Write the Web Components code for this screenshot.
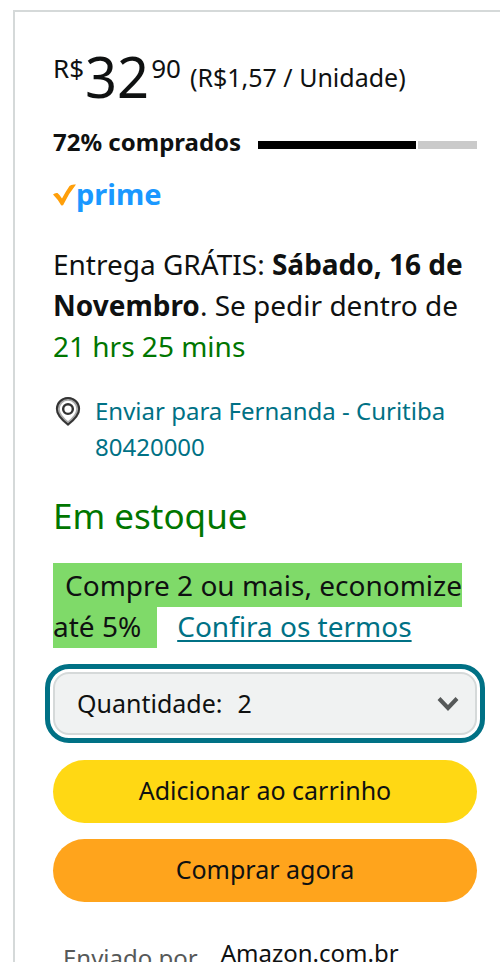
<!DOCTYPE html>
<html lang="pt-BR">
<head>
<meta charset="utf-8">
<meta name="viewport" content="width=device-width, initial-scale=1">
<title>Opções de compra</title>
<style>
  html { background: #fff; }
  body {
    margin: 0;
    color: #0f1111;
    font: 28px/41px "Noto Sans", "Open Sans", sans-serif;
    --line: #d5d9d9;
    --link: #007185;
    --ok: #007600;
    --small: 24px;
    --control: 25px;
  }
</style>
</head>
<body>
<buy-box>
  <price-tag symbol="R$" whole="32" cents="90">(R$1,57 / Unidade)</price-tag>
  <claimed-bar value="72">72% comprados</claimed-bar>
  <prime-badge></prime-badge>
  <delivery-message>Entrega GRÁTIS: <b>Sábado, 16 de Novembro</b>. Se pedir dentro de <span slot="countdown">21 hrs 25 mins</span></delivery-message>
  <delivery-location>Enviar para Fernanda - Curitiba 80420000</delivery-location>
  <stock-status>Em estoque</stock-status>
  <promo-message>Compre 2 ou mais, economize até 5%<span slot="terms">Confira os termos</span></promo-message>
  <quantity-select value="2">Quantidade:</quantity-select>
  <pill-button style="--fill:#ffd814">Adicionar ao carrinho</pill-button>
  <pill-button style="--fill:#ffa41c">Comprar agora</pill-button>
  <seller-info><span slot="term">Enviado por</span>Amazon.com.br</seller-info>
</buy-box>

<script>
  const define = (name, html, setup) => {
    const template = document.createElement('template');
    template.innerHTML = html;
    customElements.define(name, class extends HTMLElement {
      constructor() {
        super();
        this.attachShadow({ mode: 'open' }).append(template.content.cloneNode(true));
      }
      connectedCallback() {
        if (setup) setup(this, this.shadowRoot);
      }
    });
  };

  define('buy-box', `
    <style>
      :host {
        display: flex; flex-direction: column;
        box-sizing: border-box;
        margin: 10px 0 0 13px;
        padding: 36px 23px 0 38px;
        border: solid var(--line);
        border-width: 2px 0 0 2px;
      }
    </style>
    <slot></slot>`);

  define('price-tag', `
    <style>
      :host { display: flex; align-items: flex-start; white-space: nowrap; }
      .small { font-size: 26px; line-height: 40px; }
      .whole { font-size: 56px; line-height: 56px; padding: 0 2px 0 1px; }
      .unit { font-size: var(--control); line-height: 58px; padding-left: 9px; }
    </style>
    <span class="small" id="symbol"></span><span class="whole" id="whole"></span><span class="small" id="cents"></span>
    <span class="unit"><slot></slot></span>`,
    (el, root) => ['symbol', 'whole', 'cents'].forEach(k => {
      root.getElementById(k).textContent = el.getAttribute(k);
    }));

  define('claimed-bar', `
    <style>
      :host { display: flex; align-items: center; gap: 17px; margin-top: 18px; }
      span { font-size: var(--small); line-height: 36px; font-weight: 700; white-space: nowrap; }
      .track { flex: 1; display: flex; gap: 2px; height: 8px; margin-top: 6px; }
      .done { background: #000; }
      .rest { flex: 1; background: #cacaca; }
    </style>
    <span><slot></slot></span>
    <div class="track" role="progressbar" aria-valuemin="0" aria-valuemax="100"><div class="done"></div><div class="rest"></div></div>`,
    (el, root) => {
      const value = el.getAttribute('value');
      root.querySelector('.track').setAttribute('aria-valuenow', value);
      root.querySelector('.done').style.width = value + '%';
    });

  define('prime-badge', `
    <style>
      :host { display: flex; align-items: center; margin-top: 14px; color: #1a98ff; font-size: 29px; font-weight: 700; line-height: 40px; }
      svg { width: 23px; height: 24px; margin-top: 2px; }
    </style>
    <svg viewBox="0 0 23 24" aria-hidden="true"><path d="M0 11.500Q2 9.500 4.500 10 7 12 9 15.500 13 8 16.500 3 18 1 23 1.500 16 10 11 20.500 10 23.500 8 22 5 16.500 0 11.500Z" fill="#ff9f0a"/></svg><span>prime</span>`);

  define('delivery-message', `
    <style>
      :host { display: block; margin-top: 30px; }
      div { color: var(--ok); }
    </style>
    <slot></slot><div><slot name="countdown"></slot></div>`);

  define('delivery-location', `
    <style>
      :host { display: block; margin-top: 26px; }
      a { display: flex; align-items: flex-start; gap: 12px; color: var(--link); font-size: var(--small); line-height: 36px; text-decoration: none; }
      svg { flex: none; width: 30px; height: 36px; }
    </style>
    <a href="#"><svg viewBox="0 -1 31 36" fill="none" aria-hidden="true">
      <path d="M15.500 30C11.500 27 5 21.500 5 15A10.500 10.500 0 0 1 26 15C26 21.500 19.500 27 15.500 30Z" stroke="#aaa" stroke-width="4"/>
      <path d="M15.500 31C11 27.500 4 22 4 15A11.500 11.500 0 0 1 27 15C27 22 20 27.500 15.500 31Z" stroke="#333" stroke-width="2"/>
      <circle cx="15.500" cy="15" r="5" stroke="#333" stroke-width="2.500"/>
    </svg><span><slot></slot></span></a>`);

  define('stock-status', `
    <style>:host { display: block; margin-top: 27px; color: var(--ok); font-size: 35px; line-height: 48px; }</style>
    <slot></slot>`);

  define('promo-message', `
    <style>
      :host { display: block; margin-top: 25px; }
      mark { color: inherit; background: #7fda69; padding: 3px 16px 3px 12px; }
      a { color: var(--link); margin-left: 20px; text-decoration-thickness: 2px; text-underline-offset: 3px; text-decoration-skip-ink: none; }
    </style>
    <mark><slot></slot></mark><a href="#"><slot name="terms"></slot></a>`);

  define('quantity-select', `
    <style>
      :host { display: block; margin-top: 25px; }
      .box {
        display: flex; align-items: center; box-sizing: border-box;
        height: 63px; padding: 0 16px 0 22px;
        border: 2px solid var(--line); border-radius: 16px;
        background: #f0f2f2; outline: 5px solid var(--link); outline-offset: 3px;
        font-size: var(--control);
      }
      label { padding-right: 15px; }
      select {
        flex: 1; min-width: 0; margin: 0; padding: 0; border: 0; outline: 0;
        background: none; appearance: none; color: inherit; font: inherit;
      }
      svg { flex: none; width: 22px; height: 16px; }
    </style>
    <div class="box">
      <label for="qty"><slot></slot></label>
      <select id="qty"><option>1</option><option>2</option><option>3</option><option>4</option></select>
      <svg viewBox="0 0 22 16" fill="none" aria-hidden="true"><path d="M2 2.500 11 12 20 2.500" stroke="#565959" stroke-width="4"/></svg>
    </div>`,
    (el, root) => { root.querySelector('select').value = el.getAttribute('value'); });

  define('pill-button', `
    <style>
      :host { display: block; margin-top: 16px; }
      :host(:first-of-type) { margin-top: 25px; }
      button {
        display: block; width: 100%; height: 63px; padding: 0 0 2px; border: 0; border-radius: 32px;
        background: var(--fill); color: inherit; font: inherit; font-size: var(--control); cursor: pointer;
      }
    </style>
    <button type="button"><slot></slot></button>`);

  define('seller-info', `
    <style>
      :host { display: flex; align-items: flex-end; gap: 23px; margin-top: 33px; padding-left: 10px; font-size: var(--small); line-height: 36px; }
      .term { color: #565959; padding-top: 5px; }
      .value { padding-bottom: 5px; }
    </style>
    <span class="term"><slot name="term"></slot></span><span class="value"><slot></slot></span>`);
</script>
</body>
</html>
